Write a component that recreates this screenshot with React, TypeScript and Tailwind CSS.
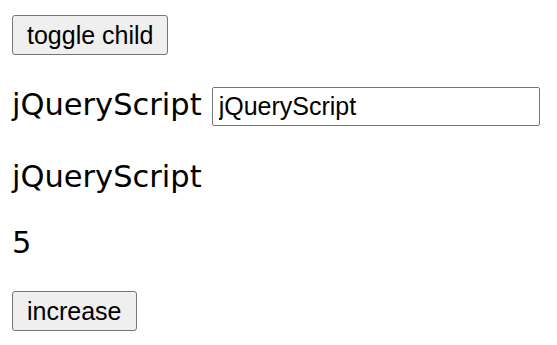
import { useState } from "react";

const verdana = { fontFamily: '"DejaVu Sans", Verdana, sans-serif' };

export default function App() {
  const [name, setName] = useState("jQueryScript");
  const [count, setCount] = useState(5);
  const [showChild, setShowChild] = useState(true);

  return (
    <div className="w-[557px] h-[345px] bg-white pl-[12px] pt-[15px] text-black font-['Liberation_Sans',Arial,sans-serif]">
      <button
        onClick={() => setShowChild(!showChild)}
        className="block h-[40px] px-[14px] text-[25px] leading-none bg-[#efefef] border border-[#767676] rounded-[3px] text-black"
      >
        toggle child
      </button>

      {showChild && (
        <div className="flex items-baseline gap-[10px] mt-[32px] h-[39px]">
          <span className="text-[30.5px] leading-[35px]" style={verdana}>{name}</span>
          <input
            value={name}
            onChange={(e) => setName(e.target.value)}
            className="w-[328px] h-[39px] px-[6px] text-[25px] border border-[#767676] rounded-[2px] outline-none"
          />
        </div>
      )}

      <div className="mt-[33px] text-[30.5px] leading-[35px]" style={verdana}>{name}</div>
      <div className="mt-[31px] text-[30.5px] leading-[35px]" style={verdana}>{count}</div>

      <button
        onClick={() => setCount(count + 1)}
        className="block mt-[31px] h-[40px] px-[14px] text-[25px] leading-none bg-[#efefef] border border-[#767676] rounded-[3px] text-black"
      >
        increase
      </button>
    </div>
  );
}
